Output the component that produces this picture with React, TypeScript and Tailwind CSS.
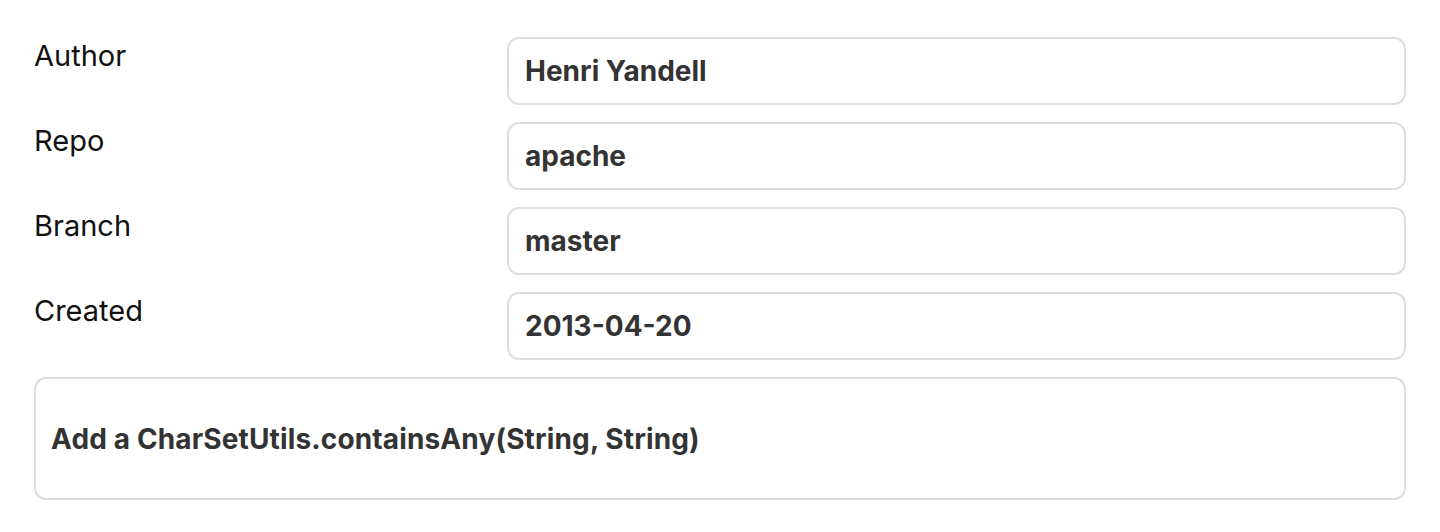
const fields = [
  { label: 'Author', value: 'Henri Yandell' },
  { label: 'Repo', value: 'apache' },
  { label: 'Branch', value: 'master' },
  { label: 'Created', value: '2013-04-20' },
];

function FieldRow({ label, value }: { label: string; value: string }) {
  return (
    <div className="flex items-start">
      <div className="w-[473px] shrink-0 text-[29px] leading-[38px] text-[#111] font-['Inter',sans-serif]">
        {label}
      </div>
      <div className="flex-1 h-[68px] flex items-center px-[16px] rounded-[12px] border-2 border-[#dedede] bg-white">
        <span className="text-[28px] font-bold text-[#333]">{value}</span>
      </div>
    </div>
  );
}

export default function App() {
  return (
    <div className="bg-white min-h-[532px] px-[34px] pt-[37px] font-['Inter',sans-serif]">
      <div className="flex flex-col gap-[17px]">
        {fields.map((f) => (
          <FieldRow key={f.label} label={f.label} value={f.value} />
        ))}
        <div className="h-[123px] flex items-center px-[15px] rounded-[12px] border-2 border-[#dedede]">
          <span className="text-[28px] font-bold tracking-[0.005em] text-[#333]">
            Add a CharSetUtils.containsAny(String, String)
          </span>
        </div>
      </div>
    </div>
  );
}
